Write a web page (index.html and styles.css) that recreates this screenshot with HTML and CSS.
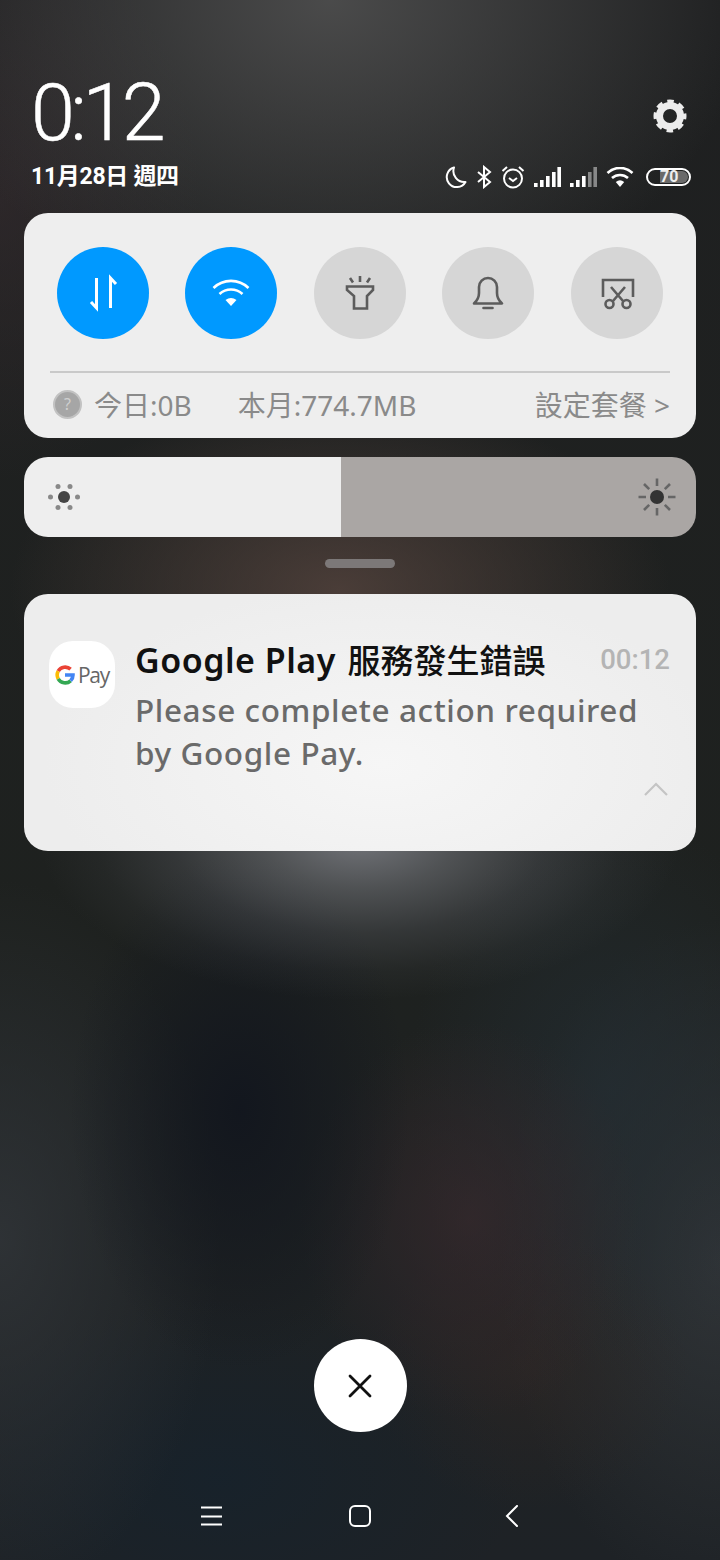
FILE: index.html
```html
<!DOCTYPE html>
<html lang="zh-TW">
<head>
    <meta charset="UTF-8">
    <meta name="viewport" content="width=device-width, initial-scale=1.0">
    <title>通知欄</title>
    <link rel="stylesheet" href="styles.css">
</head>
<body>
    <div class="screen">
        <!-- Clock and status -->
        <header class="top">
            <div class="top-row">
                <div class="clock">0:12</div>
                <svg class="gear" width="34" height="34" viewBox="0 0 34 34">
                    <circle cx="17" cy="17" r="10.5" fill="none" stroke="#ececec" stroke-width="7"/>
                    <circle cx="17" cy="17" r="14.5" fill="none" stroke="#ececec" stroke-width="4" stroke-dasharray="6.4 5" stroke-dashoffset="3.2"/>
                </svg>
            </div>
            <div class="status-row">
                <div class="date">11月28日 週四</div>
                <div class="status-icons">
                    <svg width="22" height="24" viewBox="0 0 22 24" fill="none" stroke="#fff" stroke-width="2">
                        <path d="M9 2.5 A10 10 0 1 0 20.5 17 A11 11 0 0 1 9 2.5 Z" stroke-linejoin="round"/>
                    </svg>
                    <svg width="16" height="24" viewBox="0 0 16 24" fill="none" stroke="#fff" stroke-width="2">
                        <path d="M2 7 L14 17 L8 22 V2 L14 7 L2 17"/>
                    </svg>
                    <svg width="24" height="24" viewBox="0 0 24 24" fill="none" stroke="#fff" stroke-width="2">
                        <circle cx="12" cy="13.5" r="9"/>
                        <path d="M8 13 L12 16 L16 13 M1.5 6 L6 2 M18 2 L22.5 6"/>
                    </svg>
                    <svg width="27" height="20" viewBox="0 0 27 20" fill="#fff">
                        <rect x="0" y="16" width="3.6" height="4"/>
                        <rect x="6" y="13" width="3.6" height="7"/>
                        <rect x="12" y="9" width="3.6" height="11"/>
                        <rect x="18" y="5" width="3.6" height="15"/>
                        <rect x="23.4" y="0" width="3.6" height="20"/>
                    </svg>
                    <svg width="27" height="20" viewBox="0 0 27 20" fill="#fff">
                        <rect x="0" y="16" width="3.6" height="4"/>
                        <rect x="6" y="13" width="3.6" height="7"/>
                        <rect x="12" y="9" width="3.6" height="11"/>
                        <rect x="18" y="5" width="3.6" height="15" opacity="0.45"/>
                        <rect x="23.4" y="0" width="3.6" height="20" opacity="0.45"/>
                    </svg>
                    <svg width="28" height="20" viewBox="0 0 28 20" fill="none" stroke="#fff" stroke-width="2.6">
                        <path d="M1.5 6 A18 18 0 0 1 26.5 6"/>
                        <path d="M6 11 A12 12 0 0 1 22 11"/>
                        <path d="M14 20 L9.8 15 A6.5 6.5 0 0 1 18.2 15 Z" fill="#fff" stroke="none"/>
                    </svg>
                    <div class="battery"><span class="battery-level">70</span></div>
                </div>
            </div>
        </header>

        <!-- Quick toggles -->
        <section class="panel">
            <div class="toggles">
                <div class="toggle on">
                    <svg width="40" height="40" viewBox="0 0 40 40" fill="none" stroke="#fff" stroke-width="3">
                        <path d="M13.5 5 V35 L8 29"/>
                        <path d="M27.5 35 V5 L33 11"/>
                    </svg>
                </div>
                <div class="toggle on">
                    <svg width="40" height="40" viewBox="0 0 40 40" fill="none" stroke="#fff" stroke-width="2.6">
                        <path d="M2.5 15 A25 25 0 0 1 37.5 15"/>
                        <path d="M8.5 21 A17 17 0 0 1 31.5 21"/>
                        <path d="M20 33 L14.5 27 A9 9 0 0 1 25.5 27 Z" fill="#fff" stroke="none"/>
                    </svg>
                </div>
                <div class="toggle">
                    <svg width="40" height="40" viewBox="0 0 40 40" fill="none" stroke="#5c5c5c" stroke-width="2.6">
                        <path d="M7 13.5 H33 V17 L27 23 V35.5 H14 V23 L7 17 Z"/>
                        <path d="M20 3 V9 M10 5 L13 9.5 M30 5 L27 9.5"/>
                    </svg>
                </div>
                <div class="toggle">
                    <svg width="40" height="40" viewBox="0 0 40 40" fill="none" stroke="#5c5c5c" stroke-width="2.6">
                        <path d="M6 30.5 Q11 26 11 20 V14 A9 9 0 0 1 29 14 V20 Q29 26 34 30.5 Z" stroke-linejoin="round"/>
                        <path d="M15.5 35 H24.5" stroke-linecap="round"/>
                    </svg>
                </div>
                <div class="toggle">
                    <svg width="40" height="40" viewBox="0 0 40 40" fill="none" stroke="#5c5c5c" stroke-width="2.6">
                        <path d="M6 24 V7 H36 V24"/>
                        <path d="M14 14 L26 28 M28 14 L16 28"/>
                        <circle cx="12.5" cy="31" r="4"/>
                        <circle cx="29.5" cy="31" r="4"/>
                    </svg>
                </div>
            </div>
            <div class="data-row">
                <div class="data-help"><span>?</span></div>
                <span class="data-today">今日:0B</span>
                <span class="data-month">本月:774.7MB</span>
                <span class="data-plan">設定套餐 &gt;</span>
            </div>
        </section>

        <!-- Brightness -->
        <section class="brightness">
            <div class="brightness-fill">
                <svg width="34" height="34" viewBox="0 0 34 34" fill="#888">
                    <circle cx="17" cy="17" r="6" fill="#444"/>
                    <circle cx="3.5" cy="17" r="2.5"/>
                    <circle cx="30.5" cy="17" r="2.5"/>
                    <circle cx="11" cy="6.5" r="2.5"/>
                    <circle cx="23" cy="6.5" r="2.5"/>
                    <circle cx="11" cy="27.5" r="2.5"/>
                    <circle cx="23" cy="27.5" r="2.5"/>
                </svg>
            </div>
            <div class="brightness-rest">
                <svg width="40" height="40" viewBox="0 0 40 40" fill="none" stroke="#666" stroke-width="2.6">
                    <circle cx="20" cy="20" r="7" fill="#333" stroke="none"/>
                    <path d="M20 1.5 V9 M20 31 V38.5 M1.5 20 H9 M31 20 H38.5 M7 7 L12.2 12.2 M33 7 L27.8 12.2 M7 33 L12.2 27.8 M33 33 L27.8 27.8"/>
                </svg>
            </div>
        </section>

        <div class="handle"></div>

        <!-- Notification -->
        <section class="card">
            <div class="app-icon">
                <svg width="20" height="20" viewBox="0 0 20 20" fill="none" stroke-width="3.6">
                    <path d="M3.2 6.2 A8 8 0 0 1 15.6 4.2" stroke="#ea4335"/>
                    <path d="M3.2 6.2 A8 8 0 0 0 3.2 13.8" stroke="#fbbc05"/>
                    <path d="M3.2 13.8 A8 8 0 0 0 15.6 15.8" stroke="#34a853"/>
                    <path d="M15.6 15.8 A8 8 0 0 0 18 10 H10" stroke="#4285f4"/>
                </svg>
                <span class="app-icon-text">Pay</span>
            </div>
            <div class="card-body">
                <div class="card-head">
                    <span class="card-title"><span class="card-title-latin">Google Play</span> 服務發生錯誤</span>
                    <span class="card-time">00:12</span>
                </div>
                <p class="card-text">Please complete action required by Google Pay.</p>
                <svg class="card-chevron" width="24" height="14" viewBox="0 0 24 14" fill="none" stroke="#c4c4c4" stroke-width="2.2">
                    <path d="M1 13 L12 2 L23 13"/>
                </svg>
            </div>
        </section>

        <!-- Close -->
        <div class="close">
            <svg width="24" height="24" viewBox="0 0 24 24" fill="none" stroke="#111" stroke-width="2.8" stroke-linecap="round">
                <path d="M2 2 L22 22 M22 2 L2 22"/>
            </svg>
        </div>

        <!-- Navigation -->
        <nav class="nav">
            <svg width="22" height="20" viewBox="0 0 22 20" fill="none" stroke="#fff" stroke-width="2">
                <path d="M1 1.5 H22 M1 10.5 H22 M1 18.5 H22"/>
            </svg>
            <svg width="22" height="22" viewBox="0 0 22 22" fill="none" stroke="#fff" stroke-width="2">
                <rect x="1" y="1" width="20" height="20" rx="5"/>
            </svg>
            <svg width="14" height="22" viewBox="0 0 14 22" fill="none" stroke="#fff" stroke-width="2" stroke-linecap="round">
                <path d="M12 1 L2 11 L12 21"/>
            </svg>
        </nav>
    </div>
</body>
</html>
```

FILE: styles.css
```css
html, body {
    margin: 0;
    padding: 0;
}

body {
    width: 720px;
    height: 1560px;
    overflow: hidden;
    font-family: "Noto Sans", "Noto Sans CJK TC", sans-serif;
}

.screen {
    box-sizing: border-box;
    width: 720px;
    height: 1560px;
    padding: 0 24px;
    display: flex;
    flex-direction: column;
    background-color: #1d2226;
    background-image:
        radial-gradient(ellipse 320px 160px at 360px 840px, rgba(128, 130, 136, 0.85), rgba(128, 130, 136, 0.5) 30%, rgba(122, 124, 134, 0.24) 58%, rgba(122, 124, 134, 0.07) 82%, rgba(122, 124, 134, 0) 100%),
        radial-gradient(ellipse 420px 320px at 330px 0px, rgba(85, 85, 85, 0.8), rgba(85, 85, 85, 0) 100%),
        radial-gradient(ellipse 330px 190px at 340px 590px, rgba(85, 68, 62, 0.8), rgba(85, 68, 62, 0) 100%),
        radial-gradient(ellipse 200px 280px at 0px 200px, rgba(58, 46, 50, 0.5), rgba(58, 46, 50, 0) 100%),
        radial-gradient(ellipse 170px 260px at 240px 1110px, rgba(18, 22, 30, 0.95), rgba(18, 22, 30, 0) 100%),
        radial-gradient(ellipse 170px 200px at 470px 1220px, rgba(58, 42, 46, 0.65), rgba(58, 42, 46, 0) 100%),
        radial-gradient(ellipse 160px 140px at 530px 1370px, rgba(50, 40, 36, 0.5), rgba(50, 40, 36, 0) 100%),
        radial-gradient(ellipse 200px 280px at 610px 1090px, rgba(36, 46, 52, 0.7), rgba(36, 46, 52, 0) 100%),
        radial-gradient(ellipse 220px 340px at 720px 1260px, rgba(52, 56, 60, 0.8), rgba(52, 56, 60, 0) 100%),
        radial-gradient(ellipse 220px 360px at 0px 1240px, rgba(50, 54, 58, 0.8), rgba(50, 54, 58, 0) 100%),
        radial-gradient(ellipse 300px 180px at 220px 1480px, rgba(22, 34, 44, 0.8), rgba(22, 34, 44, 0) 100%),
        linear-gradient(#1f2021, #1e211f 60%, #1e2226);
}

/* Clock and status */
.top {
    box-sizing: border-box;
    height: 213px;
    padding: 74px 5px 0 7px;
    color: #fff;
}

.top-row {
    display: flex;
    justify-content: space-between;
    align-items: flex-end;
    height: 84px;
}

.clock {
    font-family: Roboto, sans-serif;
    font-weight: 300;
    font-size: 79px;
    letter-spacing: -4.5px;
    line-height: 90px;
    -webkit-text-stroke: 0.5px #fff;
}

.gear {
    margin: 0 4px 25px 0;
}

.status-row {
    display: flex;
    justify-content: space-between;
    align-items: center;
    margin-top: 5px;
}

.date {
    font-family: Roboto, "Noto Sans CJK TC", sans-serif;
    font-weight: 700;
    font-size: 23px;
    letter-spacing: -0.3px;
    line-height: 28px;
}

.status-icons {
    display: flex;
    align-items: center;
    gap: 9px;
}

.battery {
    box-sizing: border-box;
    width: 45px;
    height: 18px;
    margin-left: 3px;
    padding: 1px;
    border: 2px solid #fff;
    border-radius: 9px;
    display: flex;
    justify-content: flex-end;
}

.battery-level {
    box-sizing: border-box;
    width: 28px;
    height: 12px;
    border-radius: 0 6px 6px 0;
    background: #6a6a6a;
    font-family: Roboto, sans-serif;
    font-weight: 700;
    font-size: 16px;
    line-height: 12px;
    color: #eee;
}

/* Quick toggles */
.panel {
    box-sizing: border-box;
    height: 225px;
    padding: 34px 26px 0;
    border-radius: 24px;
    background: #eeeeee;
}

.toggles {
    display: flex;
    justify-content: space-between;
    padding: 0 7.25px 0 6.75px;
    height: 92px;
}

.toggle {
    width: 92px;
    height: 92px;
    border-radius: 50%;
    background: #d6d6d6;
    display: flex;
    align-items: center;
    justify-content: center;
}

.toggle.on {
    background: #0099ff;
}

.data-row {
    display: flex;
    align-items: center;
    margin-top: 32px;
    height: 62px;
    border-top: 2px solid #c9c9c9;
    font-size: 28px;
    color: #8a8a8a;
}

.data-help {
    box-sizing: border-box;
    width: 29px;
    height: 29px;
    margin-left: 3px;
    border: 2px solid #c2c2c2;
    border-radius: 50%;
    background: #a6a6a6;
    color: #d0d0d0;
    font-size: 16px;
    line-height: 25px;
    text-align: center;
}

.data-today {
    margin-left: 12px;
}

.data-month {
    margin-left: 46px;
}

.data-plan {
    margin-left: auto;
}

/* Brightness */
.brightness {
    display: flex;
    height: 80px;
    margin-top: 19px;
    border-radius: 24px;
    overflow: hidden;
}

.brightness-fill {
    box-sizing: border-box;
    width: 317px;
    padding-left: 23px;
    background: #eeeeee;
    display: flex;
    align-items: center;
}

.brightness-rest {
    flex: 1;
    padding-right: 19px;
    background: #aaa6a4;
    display: flex;
    align-items: center;
    justify-content: flex-end;
}

.handle {
    width: 70px;
    height: 9px;
    margin: 22px auto 0;
    border-radius: 5px;
    background: #7c7878;
}

/* Notification */
.card {
    box-sizing: border-box;
    height: 257px;
    margin-top: 26px;
    padding: 45px 26px 0 25px;
    border-radius: 24px;
    background: radial-gradient(ellipse 340px 180px at 360px 170px, #f6f6f6, #ededed);
    display: flex;
}

.app-icon {
    box-sizing: border-box;
    width: 66px;
    height: 67px;
    margin-top: 2px;
    padding-left: 6px;
    border-radius: 24px;
    background: #fff;
    display: flex;
    align-items: center;
    gap: 3px;
}

.app-icon-text {
    font-family: "Open Sans", sans-serif;
    font-size: 21px;
    letter-spacing: -1.3px;
    color: #666;
}

.card-body {
    flex: 1;
    margin-left: 20px;
    display: flex;
    flex-direction: column;
}

.card-head {
    display: flex;
    justify-content: space-between;
    align-items: center;
    height: 40px;
}

.card-title {
    font-family: "Noto Sans", "Noto Sans CJK TC", sans-serif;
    font-weight: 500;
    font-size: 33px;
    color: #111;
}

.card-title-latin {
    font-size: 34px;
    font-weight: 600;
    letter-spacing: 0.5px;
    margin-right: 3px;
}

.card-time {
    font-family: Roboto, sans-serif;
    font-weight: 500;
    font-size: 27.5px;
    color: #b4b4b4;
}

.card-text {
    margin: 9px 0 0;
    font-family: "Noto Sans", sans-serif;
    font-weight: 500;
    font-size: 31.5px;
    letter-spacing: 0.6px;
    line-height: 43px;
    color: #6a6a6a;
}

.card-chevron {
    align-self: flex-end;
    margin-top: 8px;
    margin-right: 2px;
}

/* Close and navigation */
.close {
    width: 93px;
    height: 93px;
    margin: 488px auto 0;
    border-radius: 50%;
    background: #fff;
    display: flex;
    align-items: center;
    justify-content: center;
}

.nav {
    display: grid;
    grid-template-columns: 149px 156px 14px;
    align-items: center;
    margin: 73px 0 0;
    padding-left: 176px;
}
```
